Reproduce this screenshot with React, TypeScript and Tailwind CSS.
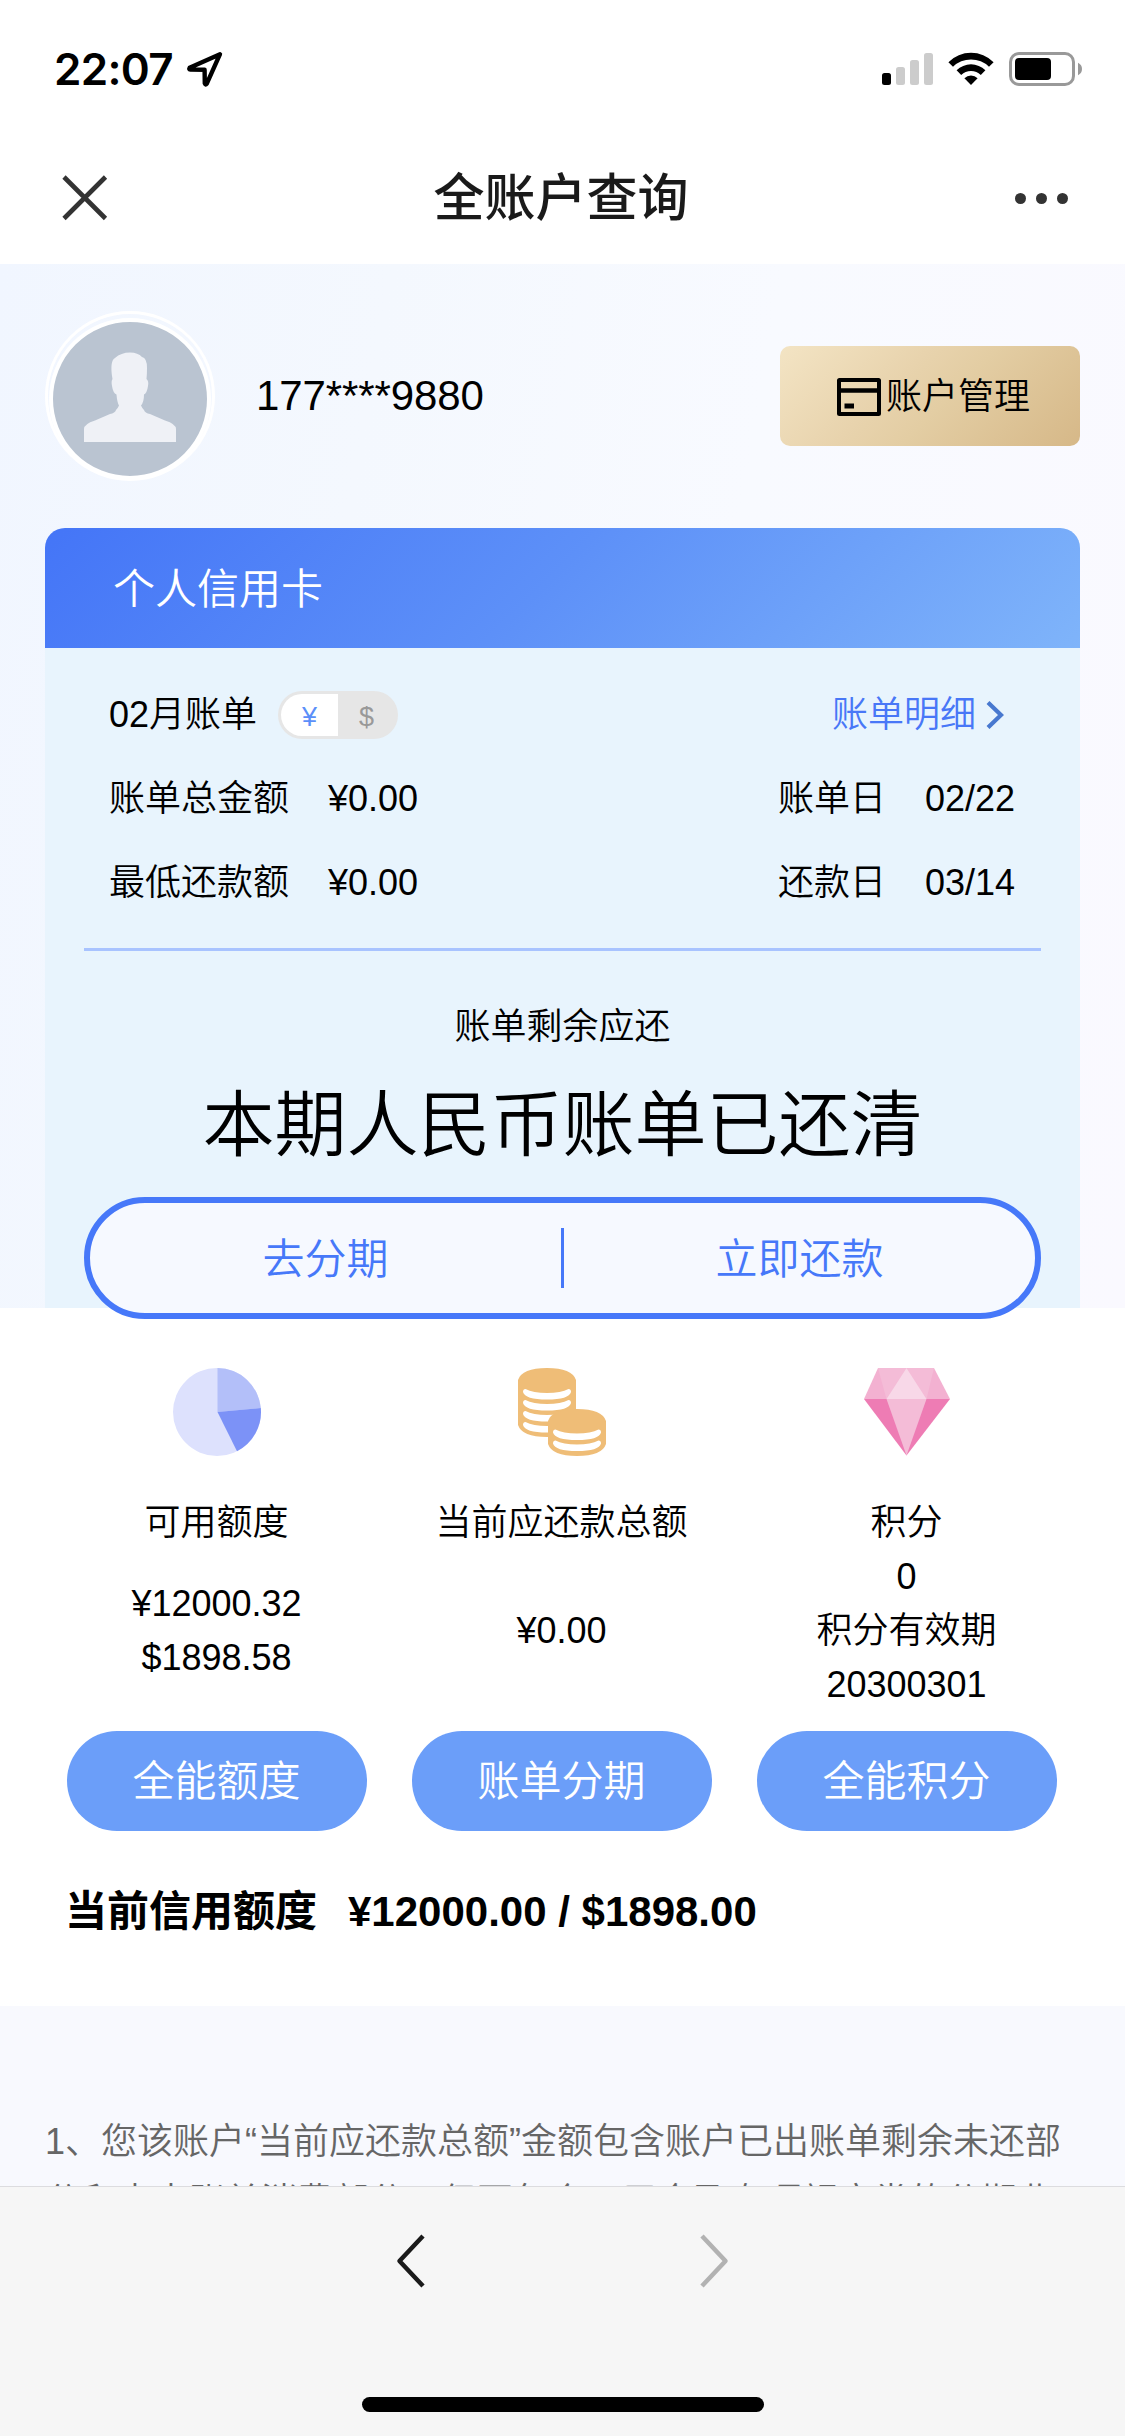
import { useState } from "react";
import type { ReactNode } from "react";

type Currency = "CNY" | "USD";

type BillRow = {
  label: string;
  amount: string;
  dateLabel: string;
  date: string;
};

type Summary = {
  key: string;
  icon: ReactNode;
  label: string;
  values: string[];
  action: string;
};

const billRows: BillRow[] = [
  { label: "账单总金额", amount: "¥0.00", dateLabel: "账单日", date: "02/22" },
  { label: "最低还款额", amount: "¥0.00", dateLabel: "还款日", date: "03/14" },
];

function LocationArrow() {
  return (
    <svg width="38" height="38" viewBox="0 0 38 38" fill="none" stroke="black" strokeWidth="4.4" strokeLinejoin="round">
      <path d="M34 4.2 L3.6 17.8 Q2.6 19.4 4.4 19.6 L18.6 19.8 L18.8 33.4 Q19.4 35.4 20.8 33.6 Z" />
    </svg>
  );
}

function SignalBars() {
  return (
    <svg width="51" height="34" viewBox="0 0 51 34">
      <rect x="0" y="21" width="9" height="12" rx="2.5" fill="#000" />
      <rect x="14" y="15" width="9" height="18" rx="2.5" fill="#ccc" />
      <rect x="28" y="8" width="9" height="25" rx="2.5" fill="#ccc" />
      <rect x="42" y="1" width="9" height="32" rx="2.5" fill="#ccc" />
    </svg>
  );
}

function WifiIcon() {
  return (
    <svg width="46" height="34" viewBox="0 0 46 34">
      <path d="M0.4 10.2 A32 32 0 0 1 45.6 10.2 L41 14.8 A25.6 25.6 0 0 0 5 14.8 Z" />
      <path d="M8.6 18.3 A20.4 20.4 0 0 1 37.4 18.3 L32.8 22.9 A14 14 0 0 0 13.2 22.9 Z" />
      <path d="M16.4 26.2 A9.4 9.4 0 0 1 29.6 26.2 L23 33 Z" />
    </svg>
  );
}

function BatteryIcon() {
  return (
    <svg width="74" height="34" viewBox="0 0 74 34">
      <rect x="1.5" y="1.5" width="63" height="31" rx="8.5" fill="none" stroke="#999" strokeWidth="3" />
      <rect x="6" y="6" width="36" height="22" rx="4" fill="#000" />
      <path d="M69 10.8 Q73 12.8 73 17 Q73 21.2 69 23.2 Z" fill="#999" />
    </svg>
  );
}

function Avatar() {
  return (
    <div className="flex size-[170px] shrink-0 items-end justify-center rounded-full border-[3px] border-white">
      <div className="-mb-[2px] size-[162px] shrink-0 overflow-hidden rounded-full border-4 border-white bg-[#bac4d1]">
        <svg width="154" height="154" viewBox="0 0 154 154">
          <path
            d="M59 54 C58 46 58 38 62 36 Q68 30.500 77 30.500 Q85 30.500 89 35 Q94 36 94 46 Q94 52 93.500 57 Q96 59 95 64 Q94 71 91 72.500 Q91 80 88 83.500 Q89 86 91 88 Q92 91 97 92 L112 98.500 Q123 102 123 107 L123 120 L31 120 L31 107 Q31 102 42 98.500 L57 92 Q62 91 63 88 Q65 86 66 83.500 Q64 80 63.500 72.500 Q60 71 59 64 Q58 59 59.500 57 Z"
            fill="#eff1f6"
          />
        </svg>
      </div>
    </div>
  );
}

function CardIcon() {
  return (
    <svg width="44" height="38" viewBox="0 0 44 38">
      <rect x="2" y="2" width="40" height="34" rx="0.5" fill="none" stroke="black" strokeWidth="4" />
      <path d="M2 12.500 H42" stroke="black" strokeWidth="4.4" />
      <path d="M7.500 28 H17" stroke="black" strokeWidth="5" />
    </svg>
  );
}

function PieIcon() {
  return (
    <svg width="88" height="88" viewBox="0 0 88 88">
      <circle cx="44" cy="44" r="44" fill="#dde1fd" />
      <path d="M44.500 44 L44.500 0 A44 44 0 0 1 87.800 40 Z" fill="#b3bff9" />
      <path d="M44.500 44 L87.800 40 A44 44 0 0 1 64 83.200 Z" fill="#7c92f7" />
    </svg>
  );
}

function CoinStripe({ x, y }: { x: number; y: number }) {
  return (
    <path
      transform={`translate(${x} ${y})`}
      d="M2.500 0 Q10 4 24 4 Q38 4 45.500 0 Q48 0 48 3 Q46 10.500 24 10.500 Q2 10.500 0 3 Q0 0 2.500 0 Z"
      fill="white"
    />
  );
}

function CoinsIcon() {
  return (
    <svg width="88" height="88" viewBox="0 0 88 88">
      <path d="M0 12 Q4 0 29 0 Q54 0 58 12 V57 Q54 69 29 69 Q4 69 0 57 Z" fill="#efbd77" />
      {[21, 32, 43, 54].map((y) => (
        <CoinStripe key={y} x={5} y={y} />
      ))}
      <path d="M30 53 Q34 41 59 41 Q84 41 88 53 V76 Q84 88 59 88 Q34 88 30 76 Z" fill="#efbd77" />
      {[61.5, 72.5].map((y) => (
        <CoinStripe key={y} x={35} y={y} />
      ))}
    </svg>
  );
}

function DiamondIcon() {
  return (
    <svg width="88" height="88" viewBox="0 0 88 88">
      <path d="M15 0 H71 L87 31 H1 Z" fill="#f3b1d1" />
      <path d="M15 0 H43.500 L23.500 31 Z" fill="#f4bcd7" />
      <path d="M71 0 H43.500 L63.500 31 Z" fill="#f4bcd7" />
      <path d="M43.500 0 L63.500 31 H23.500 Z" fill="#f8d8e8" />
      <path d="M1 31 H87 L43.500 87.500 Z" fill="#ee7cb4" />
      <path d="M23.500 31 H63.500 L43.500 87.500 Z" fill="#f4bcd7" />
    </svg>
  );
}

const summaries: Summary[] = [
  {
    key: "available",
    icon: <PieIcon />,
    label: "可用额度",
    values: ["¥12000.32", "$1898.58"],
    action: "全能额度",
  },
  {
    key: "due",
    icon: <CoinsIcon />,
    label: "当前应还款总额",
    values: ["¥0.00"],
    action: "账单分期",
  },
  {
    key: "points",
    icon: <DiamondIcon />,
    label: "积分",
    values: ["0", "积分有效期", "20300301"],
    action: "全能积分",
  },
];

function CurrencyToggle() {
  const [currency, setCurrency] = useState<Currency>("CNY");

  return (
    <div className="ml-[21px] flex h-12 w-[120px] overflow-hidden rounded-full bg-[#e6e6e6] p-[3px] text-[27px]">
      <button
        type="button"
        onClick={() => setCurrency("CNY")}
        className={`w-[57px] rounded-l-full pt-1 leading-[38px] ${currency === "CNY" ? "bg-white text-[#5b8ff9]" : "text-[#999]"}`}
      >
        ¥
      </button>
      <button
        type="button"
        onClick={() => setCurrency("USD")}
        className={`w-[57px] rounded-r-full pt-1 leading-[38px] ${currency === "USD" ? "bg-white text-[#5b8ff9]" : "text-[#999]"}`}
      >
        $
      </button>
    </div>
  );
}

function StatusBar() {
  return (
    <div className="flex h-[132px] items-start justify-between pr-[42px] pl-[54px]">
      <div className="flex items-start pt-[50px]">
        <span className="w-[132px] font-[Inter] text-[44px] leading-[38px] font-semibold tracking-[-0.7px]">22:07</span>
        <LocationArrow />
      </div>
      <div className="flex items-start pt-[52px]">
        <SignalBars />
        <div className="pl-[15px]">
          <WifiIcon />
        </div>
        <div className="pl-[15px]">
          <BatteryIcon />
        </div>
      </div>
    </div>
  );
}

function NavBar() {
  return (
    <header className="flex h-[132px] items-center justify-between px-[57px]">
      <button type="button" aria-label="关闭" className="w-14">
        <svg width="56" height="56" viewBox="0 0 56 56" stroke="#333" strokeWidth="4.6">
          <path d="M7 7 L48.500 48.500 M48.500 7 L7 48.500" />
        </svg>
      </button>
      <h1 className="pt-[3px] pr-[3px] text-[51px] font-medium text-[#1a1a1a]">全账户查询</h1>
      <button type="button" aria-label="更多" className="flex w-14 justify-end gap-2.5">
        <span className="size-[11px] shrink-0 rounded-full bg-[#333]" />
        <span className="size-[11px] shrink-0 rounded-full bg-[#333]" />
        <span className="size-[11px] shrink-0 rounded-full bg-[#333]" />
      </button>
    </header>
  );
}

function CreditCardPanel() {
  return (
    <section className="mt-[47px] h-[780px] rounded-t-[20px] bg-[#e8f4fd]">
      <h2 className="flex h-[120px] items-center rounded-t-[20px] bg-[linear-gradient(135deg,#4475f7_0%,#5d90f8_48%,#7fb4fa_100%)] pt-0.5 pl-[68px] text-[42px] font-[350] text-white">
        个人信用卡
      </h2>

      <div className="px-[64px] pt-[25px] text-[36px] leading-[84px]">
        <div className="flex items-center justify-between">
          <div className="flex items-center">
            <span>02月账单</span>
            <CurrencyToggle />
          </div>
          <a href="#detail" className="mr-[12px] flex items-center gap-2.5 text-[#4877f7]">
            账单明细
            <svg width="18" height="28" viewBox="0 0 18 28" fill="none" stroke="#4878cf" strokeWidth="4.200">
              <path d="M2 1.500 L15 14 L2 26.500" />
            </svg>
          </a>
        </div>
        {billRows.map((row) => (
          <div key={row.label} className="flex">
            <span className="w-[219px]">{row.label}</span>
            <span>{row.amount}</span>
            <span className="ml-auto w-[147px]">{row.dateLabel}</span>
            <span className="w-[91px]">{row.date}</span>
          </div>
        ))}
      </div>

      <div className="mx-[39px] mt-[23px] h-[3px] bg-[#a8c3ff]" />
      <p className="mt-[49px] text-center text-[36px] leading-[54px]">账单剩余应还</p>
      <p className="mt-[17px] text-center text-[72px] leading-[108px]">本期人民币账单已还清</p>

      {/* hangs a few pixels below the panel */}
      <div className="mx-[39px] mt-[18px] flex h-[122px] items-center rounded-full border-[6px] border-[#4678f9] bg-[#f6f9ff] text-[42px] text-[#4678f9]">
        <button type="button" className="flex-1 pt-0.5">
          去分期
        </button>
        <span className="h-[60px] w-[3px] bg-[#4678f9]" />
        <button type="button" className="flex-1 pt-0.5">
          立即还款
        </button>
      </div>
    </section>
  );
}

function SummaryColumn({ item }: { item: Summary }) {
  return (
    <div className="flex flex-col items-center text-[36px] leading-[54px]">
      {item.icon}
      <p className="mt-[40px]">{item.label}</p>
      <div className="flex h-[162px] flex-col justify-center text-center">
        {item.values.map((value) => (
          <p key={value}>{value}</p>
        ))}
      </div>
      <button type="button" className="mt-[19px] h-[100px] w-[300px] rounded-full bg-[#6b9ef9] pt-0.5 text-[42px] text-white">
        {item.action}
      </button>
    </div>
  );
}

export default function App() {
  return (
    <div className="flex h-[2436px] w-[1125px] flex-col overflow-hidden bg-white font-['Liberation_Sans','Noto_Sans_CJK_SC',sans-serif] font-[350] text-black">
      <StatusBar />
      <NavBar />

      <main className="flex min-h-0 flex-1 flex-col overflow-hidden">
        <div className="h-[1044px] shrink-0 bg-[linear-gradient(100deg,#f1f6ff_0%,#f4f8fe_30%,#f8faff_60%,#faf9ff_100%)] px-[45px] pt-[47px]">
          <div className="flex h-[170px] items-center">
            <Avatar />
            <span className="ml-[41px] pb-0.5 text-[42px] tracking-[-0.1px]">177****9880</span>
            <button
              type="button"
              className="ml-auto flex h-[100px] w-[300px] items-center justify-center gap-[5px] rounded-[10px] bg-[linear-gradient(135deg,#f3e4c4_0%,#e8d3ad_38%,#e3cda3_55%,#d6b888_100%)] pt-0.5 pl-[7px] text-[36px]"
            >
              <CardIcon />
              账户管理
            </button>
          </div>
          <CreditCardPanel />
        </div>

        <section className="h-[698px] shrink-0 pt-[60px] pr-[46px] pl-[44px]">
          <div className="grid grid-cols-3">
            {summaries.map((item) => (
              <SummaryColumn key={item.key} item={item} />
            ))}
          </div>
          <p className="mt-[49px] flex gap-[31px] pl-[21px] text-[42px] leading-[63px] font-bold">
            <span>当前信用额度</span>
            <span>¥12000.00 / $1898.00</span>
          </p>
        </section>

        <section className="flex-1 bg-[#f8f9fe] px-[45px] pt-[106px] text-[36px] leading-[60px] break-all text-[#666]">
          1、您该账户“当前应还款总额”金额包含账户已出账单剩余未还部分和未出账单消费部分，但不包含万用金及专项额度类的分期业务。
        </section>
      </main>

      <footer className="flex h-[250px] shrink-0 flex-col items-center border-t border-[#dcdcdf] bg-[#f6f6f6]">
        <div className="flex gap-[270px] pt-[46px]">
          <button type="button" aria-label="后退">
            <svg width="32" height="56" viewBox="0 0 32 56" fill="none" stroke="#1a1a1a" strokeWidth="4.500">
              <path d="M27 3 L3.500 28 L27 53" strokeLinejoin="round" />
            </svg>
          </button>
          <button type="button" aria-label="前进">
            <svg width="32" height="56" viewBox="0 0 32 56" fill="none" stroke="#b2b2b2" strokeWidth="4.500">
              <path d="M4 3 L27.500 28 L4 53" strokeLinejoin="round" />
            </svg>
          </button>
        </div>
        <div className="mt-auto mb-6 h-[15px] w-[402px] rounded-full bg-black" />
      </footer>
    </div>
  );
}
